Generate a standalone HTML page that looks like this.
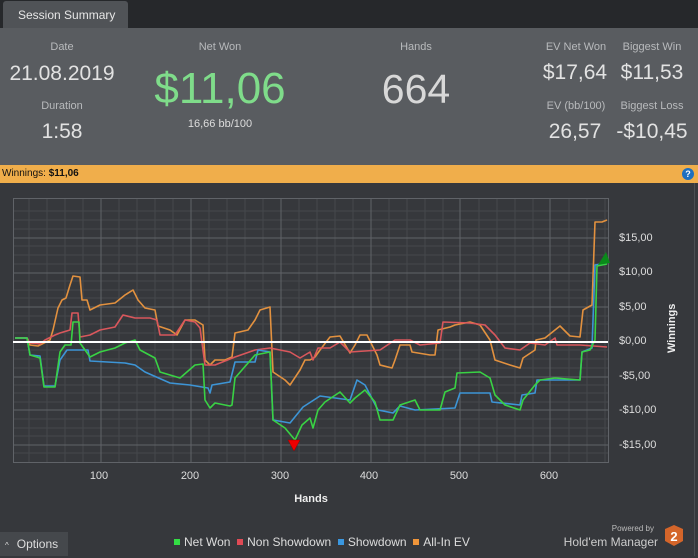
<!DOCTYPE html>
<html><head><meta charset="utf-8"><style>
*{margin:0;padding:0;box-sizing:border-box}
body{width:698px;height:556px;overflow:hidden;background:#36383c;font-family:"Liberation Sans","DejaVu Sans",sans-serif;position:relative}
.top{position:absolute;left:0;top:0;width:698px;height:28px;background:#26282b}
.tab{position:absolute;left:3px;top:1px;width:125px;height:27px;background:#505357;border-radius:3px 3px 0 0;color:#e6e6e6;font-size:12px;line-height:28px;padding-left:15px}
.panel{position:absolute;left:0;top:28px;width:698px;height:137px;background:#595c60}
.t{position:absolute;text-align:center;white-space:nowrap}
.lab{color:#b8babc;font-size:11px}
.big{color:#e2e2e2}
.bar{position:absolute;left:0;top:165px;width:698px;height:18px;background:#f0ae4b;font-size:10px;line-height:18px;padding-left:2px;color:#111}
.help{position:absolute;right:4px;top:3px;width:12px;height:12px;border-radius:50%;background:#1e6fc0;color:#fff;font-size:9px;font-weight:bold;text-align:center;line-height:12px}
.ax{position:absolute;color:#ddd;font-size:11px}
.opt{position:absolute;left:0;top:532px;width:68px;height:24px;background:#45484c;color:#ddd;font-size:12px;line-height:24px;padding-left:5px}
.leg{position:absolute;top:535px;left:174px;font-size:12px;color:#ddd;white-space:nowrap}
.sq{display:inline-block;width:6px;height:6px;margin-right:4px;vertical-align:1px}
</style></head><body>
<div class="top"><div class="tab">Session Summary</div></div>
<div class="panel">
<div class="t lab" style="left:20px;width:84px;top:13px">Date</div>
<div class="t big" style="left:0;width:124px;top:34px;font-size:21px">21.08.2019</div>
<div class="t lab" style="left:20px;width:84px;top:72px">Duration</div>
<div class="t big" style="left:20px;width:84px;top:92px;font-size:21px">1:58</div>
<div class="t lab" style="left:170px;width:100px;top:13px">Net Won</div>
<div class="t" style="left:140px;width:160px;top:36px;font-size:44px;color:#7fdc8a">$11,06</div>
<div class="t" style="left:170px;width:100px;top:90px;font-size:11px;color:#ddd">16,66 bb/100</div>
<div class="t lab" style="left:366px;width:100px;top:13px">Hands</div>
<div class="t big" style="left:346px;width:140px;top:38px;font-size:41px;color:#d8d8d8">664</div>
<div class="t lab" style="left:536px;width:80px;top:13px">EV Net Won</div>
<div class="t big" style="left:530px;width:90px;top:33px;font-size:21px">$17,64</div>
<div class="t lab" style="left:616px;width:72px;top:13px">Biggest Win</div>
<div class="t big" style="left:610px;width:84px;top:33px;font-size:21px">$11,53</div>
<div class="t lab" style="left:536px;width:80px;top:72px">EV (bb/100)</div>
<div class="t big" style="left:530px;width:90px;top:92px;font-size:21px">26,57</div>
<div class="t lab" style="left:612px;width:80px;top:72px">Biggest Loss</div>
<div class="t big" style="left:606px;width:92px;top:92px;font-size:21px">-$10,45</div>
</div>
<div class="bar">Winnings: <b>$11,06</b><div class="help">?</div></div>
<svg style="position:absolute;left:0;top:0" width="698" height="556">
<rect x="694" y="183" width="1" height="373" fill="#4b4e52"/>
<g stroke="#45484c" stroke-width="1">
<path d="M13 211H608M13 220H608M13 229H608M13 246H608M13 255H608M13 264H608M13 281H608M13 290H608M13 298H608M13 316H608M13 324H608M13 333H608M13 350H608M13 359H608M13 368H608M13 385H608M13 393H608M13 402H608M13 419H608M13 428H608M13 436H608M13 453H608"/>
<path d="M29 198V462M47 198V462M65 198V462M83 198V462M119 198V462M137 198V462M155 198V462M173 198V462M209 198V462M227 198V462M245 198V462M263 198V462M299 198V462M317 198V462M335 198V462M353 198V462M389 198V462M407 198V462M425 198V462M443 198V462M479 198V462M497 198V462M515 198V462M533 198V462M569 198V462M587 198V462M605 198V462"/>
</g>
<g stroke="#606368" stroke-width="1" fill="none">
<rect x="13.5" y="198.5" width="595" height="264"/>
<path d="M13 238H608M13 273H608M13 307H608M13 377H608M13 410H608M13 445H608M101 198V462M191 198V462M281 198V462M371 198V462M460 198V462M550 198V462"/>
</g>
<g fill="none" stroke-width="1.6" stroke-linejoin="round">
<polyline stroke="#e2913f" points="15,338 27,338 30,345 38,346 50,340 53,330 58,308 62,300 66,298 70,285 73,276 80,277 82,300 87,300 90,310 100,305 115,303 125,295 133,290 138,300 145,308 155,310 158,326 170,330 177,335 185,320 195,320 203,325 205,360 210,365 215,360 225,360 232,357 235,333 248,330 255,320 260,310 270,307 273,372 285,380 290,385 300,370 305,360 310,360 315,357 320,350 330,337 340,336 350,353 355,345 360,335 367,335 377,355 380,365 392,368 395,360 400,345 410,345 412,352 430,355 435,355 438,330 450,327 455,325 470,322 480,325 490,340 495,360 510,365 520,368 523,358 535,350 536,340 545,338 555,330 560,326 570,336 580,337 583,310 592,305 595,222 602,222 607,220"/>
<polyline stroke="#d9575c" points="15,338 27,338 30,343 40,344 45,340 55,335 60,333 70,330 72,313 78,313 80,337 90,335 100,330 115,327 123,315 135,318 150,318 157,320 160,335 175,335 185,320 195,322 200,328 205,365 215,365 235,357 255,350 270,348 290,352 300,358 310,352 313,360 318,348 330,348 340,342 350,352 380,350 395,340 410,340 420,345 440,343 443,322 470,323 485,325 495,335 505,348 520,350 530,343 545,345 555,338 557,345 580,345 607,347"/>
<polyline stroke="#3d95d6" points="15,338 27,338 30,355 40,356 44,386 55,386 60,360 67,350 88,350 90,361 125,363 135,365 145,372 170,383 190,385 208,388 210,393 212,385 230,382 235,362 255,362 258,350 270,352 273,420 290,423 303,407 320,396 350,400 357,380 365,385 378,410 393,413 400,406 415,410 455,408 460,393 490,393 492,402 520,405 522,395 535,393 537,380 580,380 582,352 592,348 595,265 607,263"/>
<polyline stroke="#39d244" points="15,338 27,338 30,355 40,358 44,387 55,387 60,352 65,345 71,345 73,322 79,322 80,343 90,357 100,352 115,348 125,343 135,340 140,350 155,358 160,372 180,378 195,365 203,364 205,400 210,408 215,403 230,406 232,405 235,378 255,355 270,352 273,420 285,428 295,440 302,425 310,418 313,428 318,410 325,402 340,392 350,403 355,398 365,390 375,402 380,420 393,420 400,405 415,400 420,410 440,410 445,392 455,388 457,373 480,372 490,378 495,395 505,405 520,410 523,400 535,385 540,380 555,378 580,380 582,352 590,350 595,340 597,266 607,264"/>
</g>
<line x1="13" y1="342" x2="608" y2="342" stroke="#fff" stroke-width="2"/>
<polygon points="288,440 300,440 294,451" fill="#e00" stroke="#900" stroke-width=".5"/>
<polygon points="598,265 610,263 606,252" fill="#0a8a1a"/>
<g fill="#ddd" font-size="11" font-family="Liberation Sans,sans-serif" text-anchor="middle">
<text x="99" y="479">100</text><text x="190" y="479">200</text><text x="280" y="479">300</text><text x="369" y="479">400</text><text x="459" y="479">500</text><text x="549" y="479">600</text>
</g>
<g fill="#ddd" font-size="11" font-family="Liberation Sans,sans-serif">
<text x="619" y="241">$15,00</text><text x="619" y="275">$10,00</text><text x="619" y="310">$5,00</text><text x="619" y="344">$0,00</text><text x="619" y="379">-$5,00</text><text x="619" y="413">-$10,00</text><text x="619" y="448">-$15,00</text>
</g>
<text x="0" y="0" transform="translate(675,353) rotate(-90)" fill="#eee" font-size="11" font-weight="bold" font-family="Liberation Sans,sans-serif">Winnings</text>
<text x="311" y="502" text-anchor="middle" fill="#eee" font-size="11" font-weight="bold" font-family="Liberation Sans,sans-serif">Hands</text>
<text x="654" y="531" text-anchor="end" fill="#bbb" font-size="8" font-family="Liberation Sans,sans-serif">Powered by</text>
<text x="658" y="546" text-anchor="end" fill="#ccc" font-size="12" font-family="Liberation Sans,sans-serif">Hold'em Manager</text>
<polygon points="674,525 683,529 683,541 674,546 665,541 665,529" fill="#d4652a"/>
<text x="674" y="541" text-anchor="middle" fill="#fff" font-size="13" font-weight="bold" font-family="Liberation Sans,sans-serif">2</text>
</svg>
<div class="opt"><span style="font-size:8px;margin-right:8px">^</span>Options</div>
<div class="leg"><span class="sq" style="background:#33dd44"></span>Net Won &nbsp;<span class="sq" style="background:#e04a55"></span>Non Showdown &nbsp;<span class="sq" style="background:#3a97e0"></span>Showdown &nbsp;<span class="sq" style="background:#f0953a"></span>All-In EV</div>
</body></html>
